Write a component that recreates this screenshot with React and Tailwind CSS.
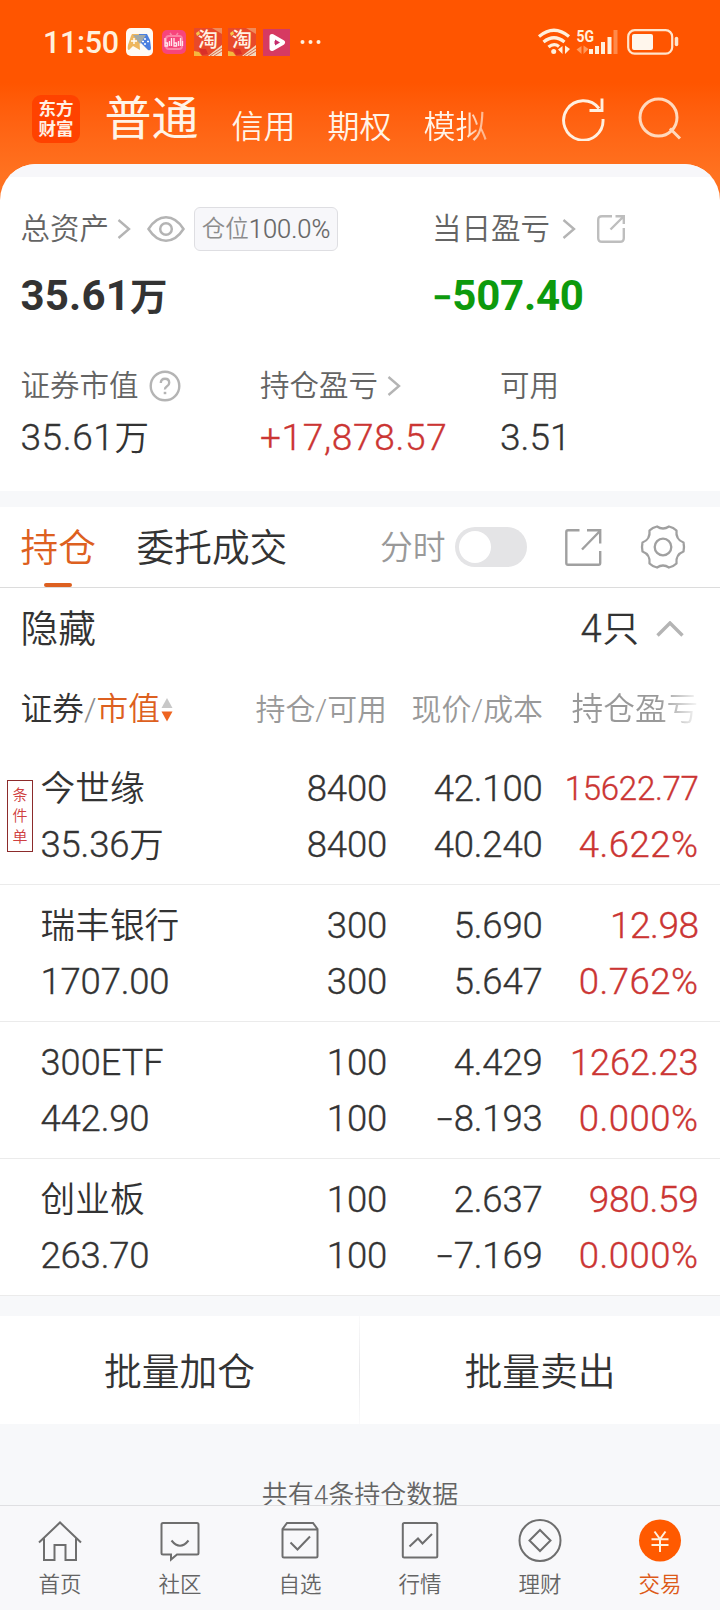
import React from 'react';

const rows = [
  { name: '今世缘', value: '35.36', unit: '万', hold: '8400', avail: '8400', price: '42.100', cost: '40.240', pl: '15622.77', pct: '4.622%', tag: true, size: 'text-[33px] tracking-[-0.3px]' },
  { name: '瑞丰银行', value: '1707.00', hold: '300', avail: '300', price: '5.690', cost: '5.647', pl: '12.98', pct: '0.762%', size: 'text-[37px] tracking-[-0.5px]' },
  { name: '300ETF', latin: true, value: '442.90', hold: '100', avail: '100', price: '4.429', sign: '−', cost: '8.193', pl: '1262.23', pct: '0.000%', size: 'text-[36px] tracking-[0px]' },
  { name: '创业板', value: '263.70', hold: '100', avail: '100', price: '2.637', sign: '−', cost: '7.169', pl: '980.59', pct: '0.000%', size: 'text-[37px] tracking-[-0.3px]' },
];

function Chevron({ className }) {
  return (
    <svg className={className} width="14" height="20" viewBox="0 0 14 20" fill="none" stroke="#b4b4b4" strokeWidth="2.400">
      <path d="M1.500 1L12 10L1.500 19" />
    </svg>
  );
}

function Taobao() {
  return (
    <div className="relative h-[28px] w-[28px] overflow-hidden bg-[#e8492a]">
      <svg className="absolute inset-0" width="28" height="28" viewBox="0 0 28 28">
        <path d="M18 0h10v6z" fill="#f08a5a" />
        <path d="M2 5l3-2 1 3-3 2z" fill="#f6c64a" />
        <path d="M0 23l5 1 3 4H0z" fill="#f5b83d" />
        <path d="M5 21h7l2 5-6 1z" fill="#d92f28" />
        <path d="M14 28L28 17v11z" fill="#f3d9bf" />
        <path d="M16 28l12-8M20 28l8-5" stroke="#d8694c" strokeWidth="1" />
      </svg>
      <span className="relative block text-center text-[20px] leading-[25px] font-medium text-[#fff3e4]">淘</span>
    </div>
  );
}

function StatusBar() {
  return (
    <div className="flex h-[84px] items-center pl-[43px]">
      <div className="w-[76px] pt-[2px] text-[30.500px] leading-[32px] tracking-[-0.3px] font-medium text-[#fff0dc]">11:50</div>
      <div className="ml-[7px] flex items-center">
        <svg width="27" height="28" viewBox="0 0 27 28">
          <rect width="27" height="28" rx="5" fill="#fffaf4" />
          <path d="M6 6h7l1 16-7-4-4 4q-2 0-1-5l3-9z" fill="#eeb75f" />
          <path d="M13 6h8l3 6 1 8q0 3-3 2l-4-4-5-5z" fill="#4b7fe0" />
          <path d="M7 7h13l-6 9z" fill="#a2a9a8" />
          <path d="M5 13h6M8 10v6" stroke="#fff" strokeWidth="1.400" />
          <path d="M19 10v2M19 15v2M16 13.500h2M21 13.500h2" stroke="#fff" strokeWidth="1.500" />
        </svg>
        <svg className="ml-[9px]" width="24" height="24" viewBox="0 0 24 24" fill="none">
          <rect width="24" height="24" rx="5" fill="#f7457c" />
          <rect x="4" y="6" width="16" height="13" rx="3" stroke="#fb83a5" strokeWidth="2" />
          <path d="M8 3l2 3M16 3l-2 3" stroke="#fb83a5" strokeWidth="1.500" />
          <path d="M3 8v8h2.500v-3H3M7.500 11v5M9.500 8v8M12 8v8h2.500v-3H12M16.500 11v5M18.500 8v8M20.500 11v5" stroke="#ffe6ec" strokeWidth="1.300" />
        </svg>
        <div className="ml-[8px]"><Taobao /></div>
        <div className="ml-[6px]"><Taobao /></div>
        <svg className="ml-[7px]" width="27" height="27" viewBox="0 0 27 27">
          <rect width="27" height="27" fill="#d63a62" />
          <path d="M9 7.500L19.500 13.500L9 19.500z" fill="none" stroke="#fff" strokeWidth="5" strokeLinejoin="round" />
          <path d="M12 10.500l5 3-5 3z" fill="#c22a6e" />
        </svg>
        <svg className="ml-[10px]" width="21" height="6" viewBox="0 0 21 6" fill="#fff0dc">
          <circle cx="2.500" cy="3" r="2" /><circle cx="10.500" cy="3" r="2" /><circle cx="18.500" cy="3" r="2" />
        </svg>
      </div>
      <svg className="ml-auto mr-[40px] overflow-visible" width="142" height="28" viewBox="0 0 142 28" fill="none">
        <g stroke="#fff0dc" strokeWidth="3.200">
          <path d="M1 8.500Q16-4 31 8.500" />
          <path d="M5.500 14Q16 5.500 26.500 14" />
          <path d="M10.500 19Q16 14.500 21 18.500" />
        </g>
        <circle cx="15.700" cy="23.500" r="2.500" fill="#fff0dc" />
        <path d="M24.500 18v8l-4.500-4.500zM27 17.500v8.500l5-5z" fill="#fff0dc" />
        <text x="38.500" y="13.500" fontSize="16" fontWeight="700" fill="#fff0dc" textLength="17.500" lengthAdjust="spacingAndGlyphs">5G</text>
        <path d="M43.500 18v8l-5-4.500zM45.500 17.500v8.500l5-5z" fill="#ff9a5c" />
        <path d="M53 26v-5M59 26v-8M65 26v-12M71.500 26V9" stroke="#fff0dc" strokeWidth="4" />
        <path d="M77.500 26V2" stroke="#ff8a4a" strokeWidth="4" />
        <rect x="90.200" y="2.200" width="44" height="23.500" rx="6.500" stroke="#ffe4cc" strokeWidth="2.200" />
        <rect x="94" y="6" width="21" height="16" rx="2" fill="#fff6ec" />
        <path d="M138.500 10.500v6" stroke="#ffe4cc" strokeWidth="3.500" strokeLinecap="round" />
      </svg>
    </div>
  );
}

function Header() {
  return (
    <header className="h-[206px] shrink-0 bg-linear-to-b from-[#ff5500] from-40% to-[#ff7220] to-85%">
      <StatusBar />
      <div className="flex h-[80px] items-start whitespace-nowrap text-[#fff4e8]">
        <div className="mt-[11px] ml-[32px] grid h-[48px] w-[48px] place-content-center rounded-[9px] bg-[#ff4200] text-center text-[17.500px] leading-[20px] font-bold text-[#fff0e4]">
          <div>东方</div>
          <div>财富</div>
        </div>
        <div className="ml-[24.500px] w-[94.500px] text-[47px] leading-[70px] font-normal">普通</div>
        <div className="ml-[32.500px] flex w-[300px] gap-[32px] pt-[18px] text-[32px] leading-[50px]">
          <span>信用</span>
          <span>期权</span>
          <span className="bg-linear-to-r from-[#fff4e8] from-60% to-[#ffab7c] bg-clip-text text-transparent">模拟</span>
        </div>
        <svg className="mt-[13px] ml-[30px]" width="44" height="44" viewBox="0 0 44 44" fill="none" stroke="#fff0e0" strokeWidth="2.900">
          <path d="M37 11.500A19.700 19.700 0 1 0 41 22" />
          <path d="M40 1.500V13.500H27.500" />
        </svg>
        <svg className="mt-[13px] ml-[32px]" width="44" height="44" viewBox="0 0 44 44" fill="none" stroke="#ffd9bd" strokeWidth="3">
          <circle cx="20.500" cy="20.500" r="18.500" />
          <path d="M32 31.500L42 41.500" />
        </svg>
      </div>
    </header>
  );
}

function Summary() {
  return (
    <section className="-mt-[42px] h-[327px] shrink-0 overflow-hidden rounded-t-[36px] bg-white text-[29.500px] whitespace-nowrap text-[#646464]">
      <div className="h-[13px] bg-[#f7f7fa]" />
      <div className="flex h-[104px] items-start pt-[28px]">
        <div className="flex w-[412px] items-center pl-[20.500px]">
          <div className="leading-[48px]">总资产</div>
          <Chevron className="ml-[8px]" />
          <svg className="ml-[16px]" width="38" height="26" viewBox="0 0 38 26" fill="none" stroke="#b4b4b4" strokeWidth="2.500">
            <path d="M1.500 13Q9 1.300 19 1.300T36.500 13Q29 24.700 19 24.700T1.500 13Z" />
            <circle cx="19" cy="13" r="5.800" />
          </svg>
          <div className="ml-[9px] flex h-[44px] w-[144px] items-center justify-center rounded-[6px] border border-[#dedee2] bg-[#f7f7fa] text-[25.500px] leading-[40px] text-[#646464]">
            <span className="text-[23.500px] text-[#8c8c8c]">仓位</span><span className="[-webkit-text-stroke:0.2px]">100.0%</span>
          </div>
        </div>
        <div className="ml-[20px] flex items-center">
          <div className="leading-[48px]">当日盈亏</div>
          <Chevron className="ml-[12px]" />
          <svg className="ml-[21px]" width="28" height="28" viewBox="0 0 28 28" fill="none" stroke="#bebebe" strokeWidth="2.400">
            <path d="M15 1.200H5Q1.200 1.200 1.200 5V23Q1.200 26.800 5 26.800H23Q26.800 26.800 26.800 23V13M13.500 14.500L26 2M18.500 1.200H26.800V9" />
          </svg>
        </div>
      </div>
      <div className="-mt-[12px] flex h-[54px] text-[42px] leading-[54px] font-bold">
        <div className="w-[432px] pl-[20.500px] tracking-[0.2px] text-[#333333]">35.61<span className="text-[37.500px]">万</span></div>
        <div className="tracking-[-0.2px] text-[#0d9a0d]"><span className="mr-[0.500px] text-[36px]">−</span>507.40</div>
      </div>
      <div className="mt-[41px] flex h-[44px] items-center leading-[44px]">
        <div className="flex w-[260px] items-center pl-[20.500px]">
          证券市值
          <svg className="ml-[10px]" width="32" height="32" viewBox="0 0 32 32" fill="none" stroke="#b4b4b4" strokeWidth="2.400">
            <circle cx="16" cy="16" r="14.300" />
            <path d="M11.800 13Q11.800 8.800 16 8.800T20.200 12.800Q20.200 15 18 16.300T16 19.500" />
            <path d="M16 21.800V24.200" strokeWidth="2.600" />
          </svg>
        </div>
        <div className="flex w-[240px] items-center">持仓盈亏<Chevron className="ml-[8.500px]" /></div>
        <div>可用</div>
      </div>
      <div className="mt-[4px] flex h-[52px] text-[37px] leading-[52px] text-[#333333] [-webkit-text-stroke:0.35px]">
        <div className="w-[260px] pl-[20.500px] tracking-[0.6px]">35.61<span className="text-[34.500px] [-webkit-text-stroke:0px]">万</span></div>
        <div className="w-[240px] tracking-[0.7px] text-[#cb3533]">+17,878.57</div>
        <div>3.51</div>
      </div>
    </section>
  );
}

function Tabs() {
  return (
    <div className="flex h-[81px] items-start border-b border-[#dcdcdc] pl-[20.500px] text-[37.700px] whitespace-nowrap text-[#333333]">
      <div className="relative h-[80px] w-[76px] leading-[83px] text-[#dd6020]">
        持仓
        <span className="absolute bottom-0 left-[23.500px] h-[4px] w-[28px] rounded-full bg-[#dd6020]" />
      </div>
      <div className="ml-[40px] w-[151px] leading-[83px]">委托成交</div>
      <div className="ml-[92.500px] w-[66px] text-[32.800px] leading-[83px] text-[#999999]">分时</div>
      <div className="mt-[20px] ml-[9px] flex h-[40px] w-[72px] items-center rounded-full bg-[#e4e4e6] pl-[4px]">
        <span className="h-[32px] w-[32px] rounded-full bg-white" />
      </div>
      <svg className="mt-[22px] ml-[38px]" width="37" height="37" viewBox="0 0 37 37" fill="none" stroke="#a0a0a0" strokeWidth="2.400">
        <path d="M14.500 1.300H3Q1.300 1.300 1.300 3V34Q1.300 35.700 3 35.700H33.500Q35.200 35.700 35.200 34V22M17 20.500L34.500 2.500M22 1.300H35.200V14.500" />
      </svg>
      <svg className="mt-[18px] ml-[38px]" width="46" height="44" viewBox="0 0 46 44" fill="none" stroke="#a0a0a0" strokeWidth="2.300" strokeLinejoin="round">
        <path d="M17 1.500Q23 5.500 29 1.500Q33.500 2.500 36.500 5.500Q35.500 14.500 43.500 17.500Q44.500 22 43.500 26.500Q35.500 29.500 36.500 38.500Q33.500 41.500 29 42.500Q23 38.500 17 42.500Q12.500 41.500 9.500 38.500Q10.500 29.500 2.500 26.500Q1.500 22 2.500 17.500Q10.500 14.500 9.500 5.500Q12.500 2.500 17 1.500Z" />
        <circle cx="23" cy="22" r="8.300" />
      </svg>
    </div>
  );
}

function Holdings() {
  return (
    <section className="shrink-0 bg-white whitespace-nowrap">
      <div className="flex h-[82px] items-center pr-[36px] pl-[20.500px] text-[37.700px] leading-[80px] text-[#333333]">
        <div className="mr-auto">隐藏</div>
        <div className="text-[36.500px]"><span className="mr-[1px] text-[38px] [-webkit-text-stroke:0.35px]">4</span>只</div>
        <svg className="ml-[17px]" width="28" height="16" viewBox="0 0 28 16" fill="none" stroke="#b4b4b4" strokeWidth="3.400">
          <path d="M1.500 14.500L14 2L26.500 14.500" />
        </svg>
      </div>
      <div className="grid h-[78px] grid-cols-[201px_165.500px_156px_155px] items-start pl-[20.500px] leading-[79px]">
        <div className="flex items-center text-[31.700px] text-[#333333]">
          证券<span className="text-[#8c8c8c]">/</span><span className="text-[#dd6020]">市值</span>
          <svg className="ml-px" width="12" height="24" viewBox="0 0 12 24">
            <path d="M6 0L11.500 10H0.500Z" fill="#c8c8c8" />
            <path d="M6 23.500L11.500 13.500H0.500Z" fill="#ee6420" />
          </svg>
        </div>
        <div className="text-right text-[29.900px] text-[#999999]">持仓/可用</div>
        <div className="text-right text-[29.900px] text-[#999999]">现价/成本</div>
        <div className="overflow-hidden bg-linear-to-r from-[#999999] from-75% to-[#f8f8f8] bg-clip-text pl-[28.500px] text-[31.700px] text-transparent">持仓盈亏</div>
      </div>
      {rows.map((r) => (
        <div key={r.name} className="relative grid h-[137px] grid-cols-[201px_145.500px_155.500px_156px] grid-rows-[56px_56px] border-b border-[#ebebeb] pt-[13px] pl-[40.500px] text-[36.500px] leading-[56px] tracking-[-0.2px] text-[#333333] [-webkit-text-stroke:0.35px]">
          {r.tag && (
            <div className="absolute top-[32px] left-[7px] flex h-[72px] w-[26px] flex-col items-center border border-[#8c2b2b] pt-[4px] text-[15px] leading-[21px] tracking-normal text-[#cf4040] [-webkit-text-stroke:0px]">
              <span>条</span><span>件</span><span>单</span>
            </div>
          )}
          <div className={r.latin ? 'text-[36px] tracking-[0.1px]' : 'text-[34.700px] tracking-normal [-webkit-text-stroke:0px]'}>{r.name}</div>
          <div className="text-right">{r.hold}</div>
          <div className="text-right">{r.price}</div>
          <div className={'text-right text-[#cb3533] ' + r.size}>{r.pl}</div>
          <div>{r.value}<span className="text-[34.500px] [-webkit-text-stroke:0px]">{r.unit}</span></div>
          <div className="text-right">{r.avail}</div>
          <div className="text-right"><span className="text-[33px]">{r.sign}</span>{r.cost}</div>
          <div className="text-right tracking-[0.5px] text-[#cb3533]">{r.pct}</div>
        </div>
      ))}
    </section>
  );
}

const nav = [
  ['首页', <path key="a" d="M1 21L22 1L43 21M6 17V38.500H16.500V23.500H27.500V38.500H38V17" transform="translate(0 1.500)" />],
  ['社区', <g key="b"><path d="M5 3H39Q40.500 3 40.500 4.500V33Q40.500 34.500 39 34.500H19L13 39.500V34.500H5Q3.500 34.500 3.500 33V4.500Q3.500 3 5 3Z" /><path d="M13.500 20.500Q22 31 30.500 20.500" /></g>],
  ['自选', <g key="c"><path d="M4.500 9V36Q4.500 37.500 6 37.500H38Q39.500 37.500 39.500 36V9L35 3H9L4.500 9ZM4.500 9.500H39.500" /><path d="M12.500 22.500L19.500 29.500L32 16.500" /></g>],
  ['行情', <g key="d"><rect x="4.800" y="3" width="34.500" height="34.500" rx="1.500" /><path d="M11.500 26.500L20 18.500L24.500 23.500L34 14" /></g>],
  ['理财', <g key="e"><circle cx="22" cy="20.500" r="20.500" /><path d="M22 10L32.500 20.500L22 31L11.500 20.500Z" /></g>],
  ['交易', <g key="f"><circle cx="22" cy="20.500" r="21" fill="#ff5a00" stroke="none" /><path d="M16.500 11.500L22 19L27.500 11.500M13.500 19.200H30.500M13.500 25H30.500M22 19V32" stroke="#fff0dc" /></g>],
];

export default function App() {
  return (
    <div className="flex h-[1610px] w-[720px] flex-col overflow-hidden bg-[#f7f8fa] font-['Roboto','Noto_Sans_CJK_SC',sans-serif] font-[350]">
      <Header />
      <Summary />
      <div className="mt-[16px] shrink-0 bg-white"><Tabs /></div>
      <Holdings />
      <div className="mt-[20px] flex h-[108px] shrink-0 items-start bg-white text-[37.800px] leading-[112px] text-[#333333]">
        <div className="w-[359px] text-center">批量加仓</div>
        <div className="h-full w-px bg-linear-to-b from-[#fafafb] via-[#e8e8ea] to-[#fafafb]" />
        <div className="flex-1 text-center">批量卖出</div>
      </div>
      <div className="flex h-[81px] shrink-0 items-end justify-center overflow-hidden">
        <div className="h-[34px] text-[26px] leading-[48px] text-[#646464]">共有4条持仓数据</div>
      </div>
      <nav className="grid h-[105px] shrink-0 grid-cols-6 border-t border-[#dfdfe2] bg-[#f8f8fa]">
        {nav.map(([label, icon]) => (
          <div key={label} className={'flex flex-col items-center pt-[14px] text-[21.500px] leading-[45px] ' + (label === '交易' ? 'text-[#dd5a18]' : 'text-[#646464]')}>
            <svg className="shrink-0 overflow-visible" width="44" height="42" viewBox="0 0 44 42" fill="none" stroke="#6e6e6e" strokeWidth="2">{icon}</svg>
            <span>{label}</span>
          </div>
        ))}
      </nav>
    </div>
  );
}
